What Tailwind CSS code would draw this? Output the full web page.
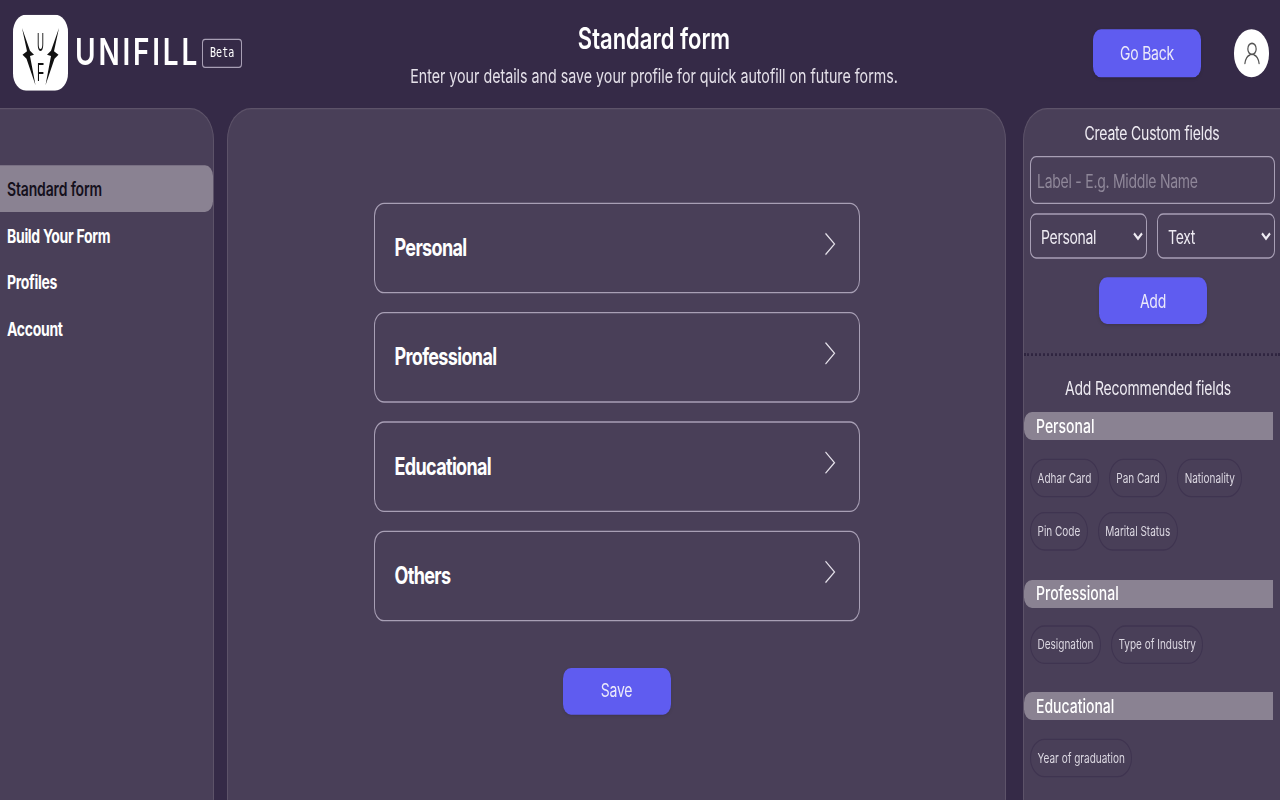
<!DOCTYPE html>
<html lang="en">
  <head>
    <meta charset="UTF-8" />
    <meta name="viewport" content="width=device-width, initial-scale=1.0" />
    <script src="https://cdn.jsdelivr.net/npm/@tailwindcss/browser@4"></script>
    <title>Unifill | Standard form</title>
  </head>
  <body class="h-screen overflow-hidden bg-[#352a47] font-['Inter',sans-serif] text-white">
    <div class="h-[600px] w-[1280px] origin-top-left scale-y-[1.3333] overflow-hidden">
      <header class="flex h-[81px] items-start">
        <div class="flex w-[245px] shrink-0 items-start pl-[13px] pt-[11px]">
          <svg class="h-[57px] w-[55px] shrink-0" viewBox="0 0 55 57">
            <rect width="55" height="57" rx="13" fill="#fff" />
            <polygon fill="#111" points="9,10 17,27 21,30 17,31 22.500,53 13.500,33 9.500,30 14,27.500" />
            <polygon fill="#111" points="46,10 38,27 34,30 38,31 32.500,53 41.500,33 45.500,30 41,27.500" />
            <text x="27.500" y="27.500" text-anchor="middle" font-family="Liberation Sans" font-size="20" textLength="7" lengthAdjust="spacingAndGlyphs" fill="#111">U</text>
            <text x="27.500" y="50" text-anchor="middle" font-family="Liberation Sans" font-size="20" textLength="7" lengthAdjust="spacingAndGlyphs" fill="#111">F</text>
          </svg>
          <span class="ml-[7px] mt-[14px] text-[28px] leading-[28px] font-semibold tracking-[2.8px]">UNIFILL</span>
          <span class="ml-[2px] mt-[18px] rounded-[3px] border border-[#a89fb5] px-[7px] font-['DejaVu_Sans_Mono',monospace] text-[10px] leading-[20px]">Beta</span>
        </div>
        <div class="w-[818px] shrink-0 pt-[17px] text-center">
          <h1 class="text-[22px] leading-[24px] font-semibold">Standard form</h1>
          <p class="mt-[6px] text-[14.25px] leading-[20px] text-[#e4e0e9]">Enter your details and save your profile for quick autofill on future forms.</p>
        </div>
        <button class="ml-[30px] mt-[22px] h-[36px] w-[108px] rounded-lg bg-[#5f5cf0] text-sm tracking-[-0.2px] text-[#ebe9fa] shadow-sm">Go Back</button>
        <div class="ml-[33px] mt-[22px] flex h-[36px] w-[35px] items-center justify-center rounded-full bg-white">
          <svg class="h-[20px] w-[20px]" viewBox="0 0 24 24" fill="none" stroke="#555" stroke-width="1.5" stroke-linecap="round">
            <circle cx="12" cy="8" r="5" />
            <path d="M3.500 21c1-5 4-7 6-7.500M20.500 21c-1-5-4-7-6-7.500" />
          </svg>
        </div>
      </header>

      <div class="flex h-[519px] items-stretch">
        <aside class="w-[214px] shrink-0 rounded-tr-[24px] border-t border-r border-[#5d5369] bg-[#493f58] pt-[42px]">
          <nav class="flex flex-col text-sm font-bold tracking-[-0.3px]">
            <a class="flex h-[35px] items-center rounded-r-lg bg-[#8a8292] pl-[7px] font-semibold tracking-[-0.15px] text-[#15101c]" href="#">Standard form</a>
            <a class="flex h-[35px] items-center pl-[7px]" href="#">Build Your Form</a>
            <a class="flex h-[35px] items-center pl-[7px]" href="#">Profiles</a>
            <a class="flex h-[35px] items-center pl-[7px]" href="#">Account</a>
          </nav>
        </aside>

        <main class="ml-[13px] flex w-[779px] shrink-0 flex-col items-center rounded-t-[24px] border-t border-x border-[#5d5369] bg-[#493f58] pt-[70px]">
          <div class="flex w-[486px] flex-col gap-[14px]">
            <div class="flex h-[68px] items-center justify-between rounded-[10px] border border-[#a89fb5] pl-[20px] pr-[23px]">
              <span class="text-lg font-bold tracking-[-0.65px]">Personal</span>
              <svg class="mb-[6px] h-[18px] w-[12px]" viewBox="0 0 12 18" fill="none" stroke="#e4e0e9" stroke-width="1.100"><path d="M1.500 1l9 8-9 8" /></svg>
            </div>
            <div class="flex h-[68px] items-center justify-between rounded-[10px] border border-[#a89fb5] pl-[20px] pr-[23px]">
              <span class="text-lg font-bold tracking-[-0.65px]">Professional</span>
              <svg class="mb-[6px] h-[18px] w-[12px]" viewBox="0 0 12 18" fill="none" stroke="#e4e0e9" stroke-width="1.100"><path d="M1.500 1l9 8-9 8" /></svg>
            </div>
            <div class="flex h-[68px] items-center justify-between rounded-[10px] border border-[#a89fb5] pl-[20px] pr-[23px]">
              <span class="text-lg font-bold tracking-[-0.65px]">Educational</span>
              <svg class="mb-[6px] h-[18px] w-[12px]" viewBox="0 0 12 18" fill="none" stroke="#e4e0e9" stroke-width="1.100"><path d="M1.500 1l9 8-9 8" /></svg>
            </div>
            <div class="flex h-[68px] items-center justify-between rounded-[10px] border border-[#a89fb5] pl-[20px] pr-[23px]">
              <span class="text-lg font-bold tracking-[-0.65px]">Others</span>
              <svg class="mb-[6px] h-[18px] w-[12px]" viewBox="0 0 12 18" fill="none" stroke="#e4e0e9" stroke-width="1.100"><path d="M1.500 1l9 8-9 8" /></svg>
            </div>
          </div>
          <button class="mt-[34.5px] h-[35px] w-[108px] rounded-lg bg-[#5f5cf0] text-sm tracking-[-0.2px] text-[#ebe9fa] shadow-sm">Save</button>
        </main>

        <aside class="ml-[17px] w-[257px] shrink-0 rounded-tl-[24px] border-t border-l border-[#5d5369] bg-[#493f58]">
          <h2 class="pt-[8px] text-center text-sm leading-[20px] tracking-[-0.2px] text-[#eeebf2]">Create Custom fields</h2>
          <div class="pl-[6px] pr-[5px] pt-[7px]">
            <input class="h-[36px] w-full rounded-md border border-[#a89fb5] bg-transparent px-[6px] text-sm tracking-[-0.25px] placeholder:text-[#8f8799]" placeholder="Label - E.g. Middle Name" />
            <div class="mt-[7px] flex gap-[10px]">
              <select class="h-[34px] w-[117px] rounded-md border border-[#a89fb5] bg-transparent pl-[6px] text-sm tracking-[-0.3px] text-[#eeebf2]"><option>Personal</option></select>
              <select class="h-[34px] w-[118px] rounded-md border border-[#a89fb5] bg-transparent pl-[6px] text-sm tracking-[-0.3px] text-[#eeebf2]"><option>Text</option></select>
            </div>
          </div>
          <div class="mt-[14px] flex justify-center pl-[2px]">
            <button class="h-[35px] w-[108px] rounded-lg bg-[#5f5cf0] text-sm tracking-[-0.2px] text-[#ebe9fa] shadow-sm">Add</button>
          </div>
          <div class="mt-[21.5px] border-t-2 border-dotted border-[#2f2540]"></div>
          <h2 class="mt-[14.5px] pr-[8px] text-center text-sm leading-[20px] tracking-[-0.2px] text-[#eeebf2]">Add Recommended fields</h2>

          <h3 class="mt-[8px] mr-[7px] flex h-[21px] items-center rounded-l-lg bg-[#8a8292] pl-[12px] text-sm font-medium">Personal</h3>
          <div class="mt-[14px] flex flex-wrap gap-x-[10px] gap-y-[10.5px] pl-[6px] pr-[20px]">
            <span class="flex h-[29px] items-center rounded-full border border-[#3f3450] px-[6.5px] text-[10px] text-[#dcd8e2]">Adhar Card</span>
            <span class="flex h-[29px] items-center rounded-full border border-[#3f3450] px-[6.5px] text-[10px] text-[#dcd8e2]">Pan Card</span>
            <span class="flex h-[29px] items-center rounded-full border border-[#3f3450] px-[6.5px] text-[10px] text-[#dcd8e2]">Nationality</span>
            <span class="flex h-[29px] items-center rounded-full border border-[#3f3450] px-[6.5px] text-[10px] text-[#dcd8e2]">Pin Code</span>
            <span class="flex h-[29px] items-center rounded-full border border-[#3f3450] px-[6.5px] text-[10px] text-[#dcd8e2]">Marital Status</span>
          </div>

          <h3 class="mt-[22px] mr-[7px] flex h-[21px] items-center rounded-l-lg bg-[#8a8292] pl-[12px] text-sm font-medium">Professional</h3>
          <div class="mt-[13.5px] flex flex-wrap gap-x-[10px] gap-y-[10.5px] pl-[6px] pr-[20px]">
            <span class="flex h-[29px] items-center rounded-full border border-[#3f3450] px-[6.5px] text-[10px] text-[#dcd8e2]">Designation</span>
            <span class="flex h-[29px] items-center rounded-full border border-[#3f3450] px-[6.5px] text-[10px] text-[#dcd8e2]">Type of Industry</span>
          </div>

          <h3 class="mt-[21px] mr-[7px] flex h-[21px] items-center rounded-l-lg bg-[#8a8292] pl-[12px] text-sm font-medium">Educational</h3>
          <div class="mt-[13.5px] flex flex-wrap gap-x-[10px] gap-y-[10.5px] pl-[6px] pr-[20px]">
            <span class="flex h-[29px] items-center rounded-full border border-[#3f3450] px-[6.5px] text-[10px] text-[#dcd8e2]">Year of graduation</span>
          </div>
        </aside>
      </div>
    </div>
  </body>
</html>
